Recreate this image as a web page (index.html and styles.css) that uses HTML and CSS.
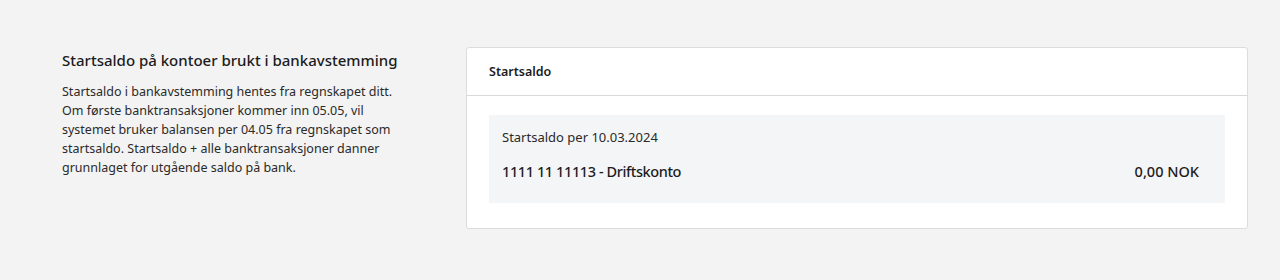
FILE: index.html
```html
<!DOCTYPE html>
<html lang="no">
  <head>
    <meta charset="UTF-8">
    <meta name="viewport" content="width=device-width, initial-scale=1.0">
    <title>Startsaldo</title>
    <link rel="stylesheet" href="styles.css">
  </head>
  <body>
    <section class="settings-row">
      <div class="settings-info">
        <h2>Startsaldo på kontoer brukt i bankavstemming</h2>
        <p>Startsaldo i bankavstemming hentes fra regnskapet ditt. Om første banktransaksjoner kommer inn 05.05, vil systemet bruker balansen per 04.05 fra regnskapet som startsaldo. Startsaldo + alle banktransaksjoner danner grunnlaget for utgående saldo på bank.</p>
      </div>

      <div class="card">
        <div class="card-header">Startsaldo</div>
        <div class="card-body">
          <div class="balance-box">
            <div class="balance-date">Startsaldo per 10.03.2024</div>
            <div class="balance-row">
              <span class="account">1111 11 11113 - Driftskonto</span>
              <span class="amount">0,00 NOK</span>
            </div>
          </div>
        </div>
      </div>
    </section>
  </body>
</html>
```

FILE: styles.css
```css
body {
  margin: 0;
  padding: 0;
  background-color: #f3f3f3;
  font-family: "Noto Sans", Arial, sans-serif;
  color: #222;
}
.settings-row {
  display: grid;
  grid-template-columns: 345px 1fr;
  column-gap: 59px;
  padding: 47px 32px 0 62px;
}
.settings-info h2 {
  margin: 3px 0 12px;
  font-size: 15px;
  font-weight: 500;
  line-height: 20px;
  color: #1c1c1c;
}
.settings-info p {
  margin: 0;
  font-size: 12.5px;
  line-height: 19px;
  color: #2a2a2a;
}
.card {
  background-color: #fff;
  border: 1px solid #dcdcdc;
  border-radius: 3px;
}
.card-header {
  height: 47px;
  padding: 0 22px;
  display: flex;
  align-items: center;
  border-bottom: 1px solid #d9d9d9;
  font-size: 12.5px;
  font-weight: 600;
  color: #1c1c1c;
}
.card-body {
  padding: 19px 22px 25px;
}
.balance-box {
  background-color: #f4f5f7;
  padding: 13px 26px 22px 13px;
}
.balance-date {
  font-size: 13px;
  line-height: 19px;
  color: #2a2a2a;
}
.balance-row {
  display: flex;
  justify-content: space-between;
  align-items: center;
  margin-top: 14px;
  font-size: 14px;
  font-weight: 500;
  color: #1c1c1c;
}
.account {
  font-size: 14.5px;
  letter-spacing: -0.4px;
}
.amount {
  font-size: 14.5px;
}
```
